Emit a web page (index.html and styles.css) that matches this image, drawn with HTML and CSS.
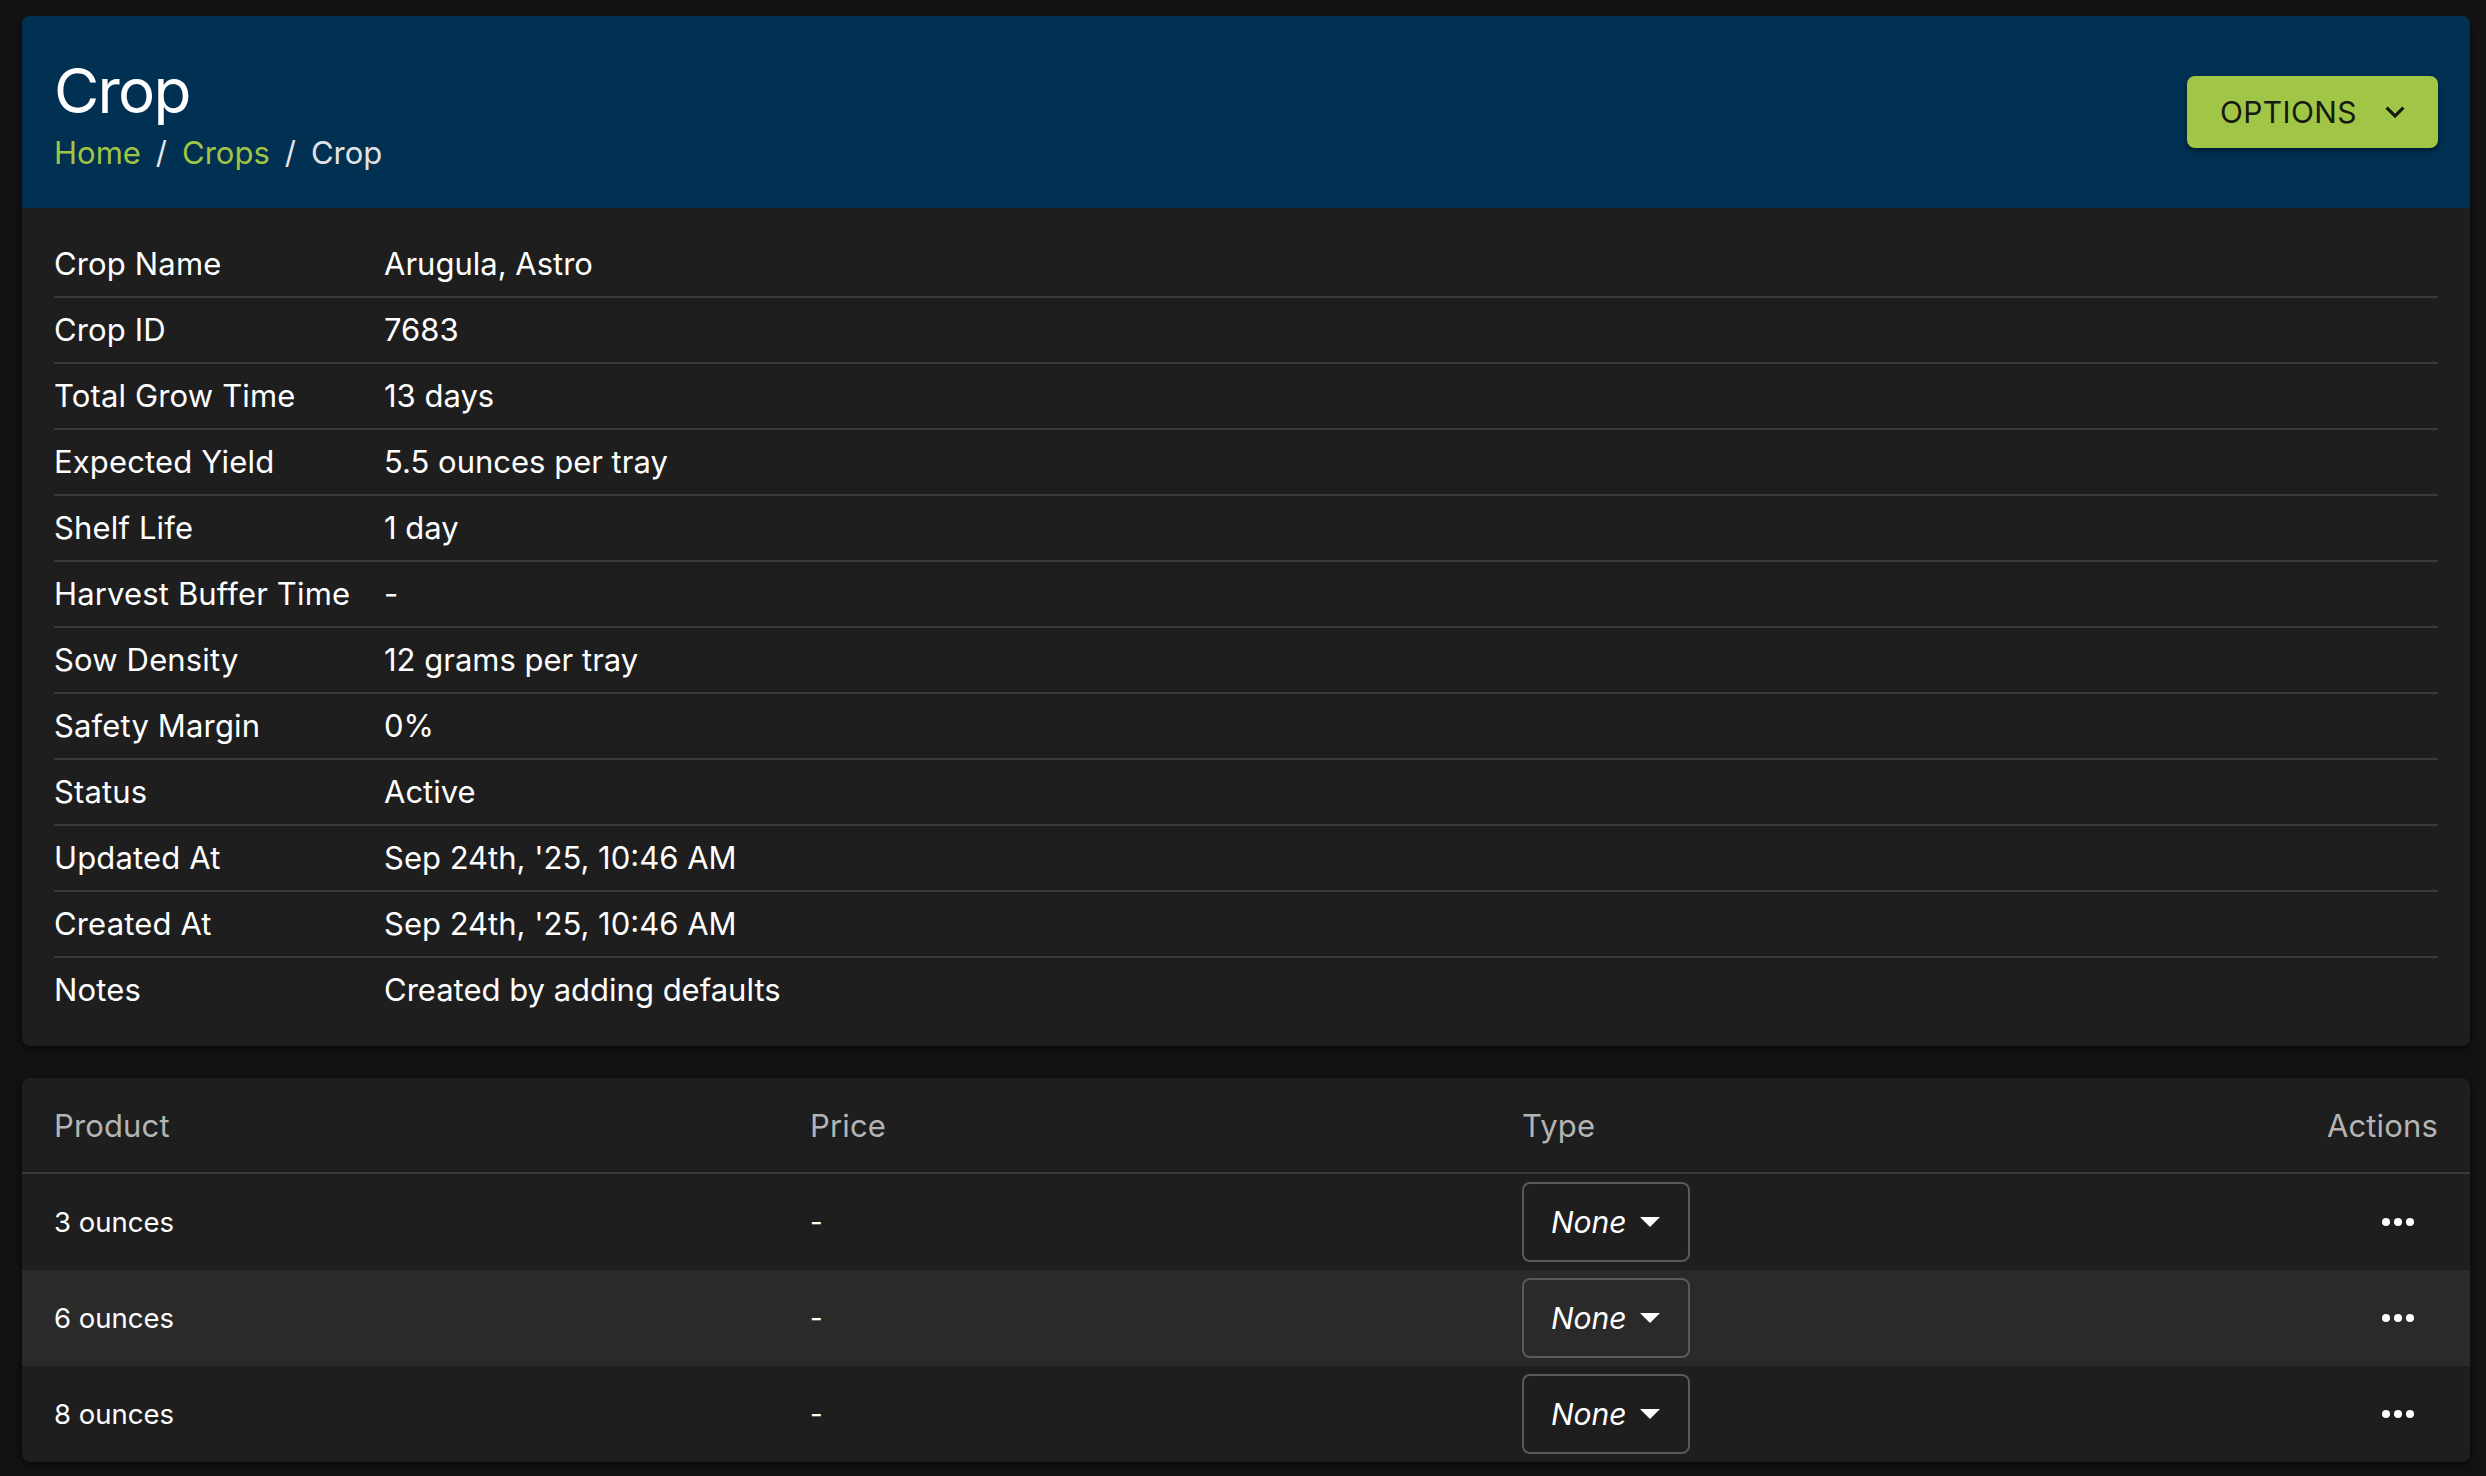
FILE: index.html
```html
<!DOCTYPE html>
<html lang="en">
<head>
<meta charset="utf-8">
<title>Crop</title>
<link rel="stylesheet" href="styles.css">
</head>
<body>
<div class="page">
  <section class="card">
    <header class="card-header">
      <div class="titles">
        <h1 class="title">Crop</h1>
        <nav class="crumbs">
          <a class="crumb-link" href="#">Home</a>
          <span class="sep">/</span>
          <a class="crumb-link" href="#">Crops</a>
          <span class="sep">/</span>
          <span class="crumb-current">Crop</span>
        </nav>
      </div>
      <button class="options-btn" type="button">
        <span>OPTIONS</span>
        <svg class="chev" viewBox="0 0 24 24" aria-hidden="true"><path d="M16.59 8.59 12 13.17 7.41 8.59 6 10l6 6 6-6z"/></svg>
      </button>
    </header>
    <div class="details">
      <div class="d-row"><div class="d-label">Crop Name</div><div class="d-value">Arugula, Astro</div></div>
      <div class="d-row"><div class="d-label">Crop ID</div><div class="d-value">7683</div></div>
      <div class="d-row"><div class="d-label">Total Grow Time</div><div class="d-value">13 days</div></div>
      <div class="d-row"><div class="d-label">Expected Yield</div><div class="d-value">5.5 ounces per tray</div></div>
      <div class="d-row"><div class="d-label">Shelf Life</div><div class="d-value">1 day</div></div>
      <div class="d-row"><div class="d-label">Harvest Buffer Time</div><div class="d-value">-</div></div>
      <div class="d-row"><div class="d-label">Sow Density</div><div class="d-value">12 grams per tray</div></div>
      <div class="d-row"><div class="d-label">Safety Margin</div><div class="d-value">0%</div></div>
      <div class="d-row"><div class="d-label">Status</div><div class="d-value">Active</div></div>
      <div class="d-row"><div class="d-label">Updated At</div><div class="d-value">Sep 24th, '25, 10:46 AM</div></div>
      <div class="d-row"><div class="d-label">Created At</div><div class="d-value">Sep 24th, '25, 10:46 AM</div></div>
      <div class="d-row"><div class="d-label">Notes</div><div class="d-value">Created by adding defaults</div></div>
    </div>
  </section>

  <section class="card table-card">
    <div class="t-head">
      <div>Product</div>
      <div>Price</div>
      <div>Type</div>
      <div class="t-right">Actions</div>
    </div>
    <div class="t-row">
      <div>3 ounces</div>
      <div>-</div>
      <div><div class="select"><span class="select-text">None</span><svg class="caret" viewBox="0 0 20 10" aria-hidden="true"><polygon points="0,0 20,0 10,10"/></svg></div></div>
      <div class="t-right"><svg class="dots" viewBox="0 0 48 48" aria-hidden="true"><circle cx="12" cy="24" r="4"/><circle cx="24" cy="24" r="4"/><circle cx="36" cy="24" r="4"/></svg></div>
    </div>
    <div class="t-row striped">
      <div>6 ounces</div>
      <div>-</div>
      <div><div class="select"><span class="select-text">None</span><svg class="caret" viewBox="0 0 20 10" aria-hidden="true"><polygon points="0,0 20,0 10,10"/></svg></div></div>
      <div class="t-right"><svg class="dots" viewBox="0 0 48 48" aria-hidden="true"><circle cx="12" cy="24" r="4"/><circle cx="24" cy="24" r="4"/><circle cx="36" cy="24" r="4"/></svg></div>
    </div>
    <div class="t-row">
      <div>8 ounces</div>
      <div>-</div>
      <div><div class="select"><span class="select-text">None</span><svg class="caret" viewBox="0 0 20 10" aria-hidden="true"><polygon points="0,0 20,0 10,10"/></svg></div></div>
      <div class="t-right"><svg class="dots" viewBox="0 0 48 48" aria-hidden="true"><circle cx="12" cy="24" r="4"/><circle cx="24" cy="24" r="4"/><circle cx="36" cy="24" r="4"/></svg></div>
    </div>
  </section>
</div>
</body>
</html>
```

FILE: styles.css
```css
* { box-sizing: border-box; }

html, body {
  margin: 0;
  padding: 0;
  background: #121212;
}

body {
  font-family: Inter, "Noto Sans", "DejaVu Sans", sans-serif;
  color: #ffffff;
  font-size: 31px;
}

.page {
  padding: 16px 16px 14px 22px;
  display: flex;
  flex-direction: column;
  gap: 32px;
}

.card {
  background: #1e1e1e;
  border-radius: 8px;
  overflow: hidden;
  box-shadow: 0 3px 6px rgba(0, 0, 0, 0.55);
}

/* ---------- header ---------- */
.card-header {
  background: #003052;
  display: flex;
  justify-content: space-between;
  align-items: center;
  padding: 37px 32px 33px 32px;
}

.title {
  margin: 0;
  font-size: 62px;
  font-weight: 400;
  line-height: 76px;
  letter-spacing: -1.8px;
  color: #ffffff;
}

.crumbs {
  margin-top: 1px;
  line-height: 45px;
  font-size: 31px;
  display: flex;
  align-items: baseline;
}

.crumb-link {
  color: #a0c544;
  text-decoration: none;
}

.sep {
  color: #e6e6e6;
  margin: 0 15px;
}

.crumb-current {
  color: #e3e3e3;
}

.options-btn {
  display: flex;
  align-items: center;
  height: 72px;
  margin-bottom: 4px;
  padding: 0 24px 0 33px;
  background: #a1c546;
  color: #16190f;
  border: none;
  border-radius: 8px;
  font-family: Inter, "Noto Sans", sans-serif;
  font-size: 30px;
  font-weight: 400;
  letter-spacing: 0.4px;
  box-shadow: 0 3px 5px rgba(0, 0, 0, 0.45);
  cursor: pointer;
}

.chev {
  width: 38px;
  height: 38px;
  margin-left: 19px;
  fill: #16190f;
}

/* ---------- details ---------- */
.details {
  padding: 24px 32px;
}

.d-row {
  display: grid;
  grid-template-columns: 330px 1fr;
  align-items: center;
  height: 66px;
  border-bottom: 2px solid #3a3a3a;
  line-height: 36px;
}

.d-row:last-child {
  border-bottom: none;
  height: 64px;
}

.d-label {
  color: #ffffff;
  letter-spacing: 0.15px;
}

.d-value {
  color: #ffffff;
}

/* ---------- table ---------- */
.t-head,
.t-row {
  display: grid;
  grid-template-columns: 756px 712px 1fr auto;
  align-items: center;
  padding: 0 32px;
}

.t-head {
  height: 96px;
  border-bottom: 2px solid #3a3a3a;
  color: #b4b4b4;
  font-size: 31px;
  letter-spacing: 0.15px;
}

.t-row {
  height: 96px;
  font-size: 27.5px;
  color: #ffffff;
}

.t-row.striped {
  background: #2a2a2a;
}

.t-right {
  text-align: right;
  display: flex;
  justify-content: flex-end;
}

.select {
  display: inline-flex;
  align-items: center;
  width: 168px;
  height: 80px;
  padding: 0 28px 0 27px;
  border: 2px solid #5a5a5a;
  border-radius: 8px;
  justify-content: space-between;
}

.select-text {
  font-style: italic;
  font-size: 30px;
  color: #ffffff;
}

.caret {
  width: 20px;
  height: 10px;
  fill: #ffffff;
}

.dots {
  width: 48px;
  height: 48px;
  margin-right: 16px;
  fill: #ffffff;
}
```
